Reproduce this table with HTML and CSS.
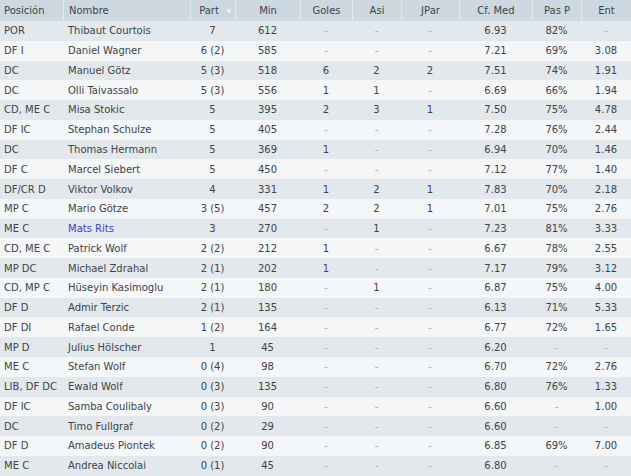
FILE: index.html
```html
<!DOCTYPE html>
<html lang="es">
<head>
<meta charset="utf-8">
<title>Plantilla</title>
<link rel="stylesheet" href="styles.css">
</head>
<body>
<div class="table">
  <div class="row head">
    <div class="c l">Posición</div><div class="c l">Nombre</div><div class="c sort">Part<span class="arrow">▼</span></div><div class="c">Min</div><div class="c">Goles</div><div class="c">Asi</div><div class="c">JPar</div><div class="c">Cf. Med</div><div class="c">Pas P</div><div class="c">Ent</div>
  </div>
  <div class="row"><div class="c l">POR</div><div class="c l">Thibaut Courtois</div><div class="c">7</div><div class="c">612</div><div class="c d">-</div><div class="c d">-</div><div class="c d">-</div><div class="c">6.93</div><div class="c">82%</div><div class="c d">-</div></div>
  <div class="row"><div class="c l">DF I</div><div class="c l">Daniel Wagner</div><div class="c">6 (2)</div><div class="c">585</div><div class="c d">-</div><div class="c d">-</div><div class="c d">-</div><div class="c">7.21</div><div class="c">69%</div><div class="c">3.08</div></div>
  <div class="row"><div class="c l">DC</div><div class="c l">Manuel Götz</div><div class="c">5 (3)</div><div class="c">518</div><div class="c">6</div><div class="c">2</div><div class="c">2</div><div class="c">7.51</div><div class="c">74%</div><div class="c">1.91</div></div>
  <div class="row"><div class="c l">DC</div><div class="c l">Olli Taivassalo</div><div class="c">5 (3)</div><div class="c">556</div><div class="c">1</div><div class="c">1</div><div class="c d">-</div><div class="c">6.69</div><div class="c">66%</div><div class="c">1.94</div></div>
  <div class="row"><div class="c l">CD, ME C</div><div class="c l">Misa Stokic</div><div class="c">5</div><div class="c">395</div><div class="c">2</div><div class="c">3</div><div class="c">1</div><div class="c">7.50</div><div class="c">75%</div><div class="c">4.78</div></div>
  <div class="row"><div class="c l">DF IC</div><div class="c l">Stephan Schulze</div><div class="c">5</div><div class="c">405</div><div class="c d">-</div><div class="c d">-</div><div class="c d">-</div><div class="c">7.28</div><div class="c">76%</div><div class="c">2.44</div></div>
  <div class="row"><div class="c l">DC</div><div class="c l">Thomas Hermann</div><div class="c">5</div><div class="c">369</div><div class="c">1</div><div class="c d">-</div><div class="c d">-</div><div class="c">6.94</div><div class="c">70%</div><div class="c">1.46</div></div>
  <div class="row"><div class="c l">DF C</div><div class="c l">Marcel Siebert</div><div class="c">5</div><div class="c">450</div><div class="c d">-</div><div class="c d">-</div><div class="c d">-</div><div class="c">7.12</div><div class="c">77%</div><div class="c">1.40</div></div>
  <div class="row"><div class="c l">DF/CR D</div><div class="c l">Viktor Volkov</div><div class="c">4</div><div class="c">331</div><div class="c">1</div><div class="c">2</div><div class="c">1</div><div class="c">7.83</div><div class="c">70%</div><div class="c">2.18</div></div>
  <div class="row"><div class="c l">MP C</div><div class="c l">Mario Götze</div><div class="c">3 (5)</div><div class="c">457</div><div class="c">2</div><div class="c">2</div><div class="c">1</div><div class="c">7.01</div><div class="c">75%</div><div class="c">2.76</div></div>
  <div class="row"><div class="c l">ME C</div><div class="c l link">Mats Rits</div><div class="c">3</div><div class="c">270</div><div class="c d">-</div><div class="c">1</div><div class="c d">-</div><div class="c">7.23</div><div class="c">81%</div><div class="c">3.33</div></div>
  <div class="row"><div class="c l">CD, ME C</div><div class="c l">Patrick Wolf</div><div class="c">2 (2)</div><div class="c">212</div><div class="c">1</div><div class="c d">-</div><div class="c d">-</div><div class="c">6.67</div><div class="c">78%</div><div class="c">2.55</div></div>
  <div class="row"><div class="c l">MP DC</div><div class="c l">Michael Zdrahal</div><div class="c">2 (1)</div><div class="c">202</div><div class="c">1</div><div class="c d">-</div><div class="c d">-</div><div class="c">7.17</div><div class="c">79%</div><div class="c">3.12</div></div>
  <div class="row"><div class="c l">CD, MP C</div><div class="c l">Hüseyin Kasimoglu</div><div class="c">2 (1)</div><div class="c">180</div><div class="c d">-</div><div class="c">1</div><div class="c d">-</div><div class="c">6.87</div><div class="c">75%</div><div class="c">4.00</div></div>
  <div class="row"><div class="c l">DF D</div><div class="c l">Admir Terzic</div><div class="c">2 (1)</div><div class="c">135</div><div class="c d">-</div><div class="c d">-</div><div class="c d">-</div><div class="c">6.13</div><div class="c">71%</div><div class="c">5.33</div></div>
  <div class="row"><div class="c l">DF DI</div><div class="c l">Rafael Conde</div><div class="c">1 (2)</div><div class="c">164</div><div class="c d">-</div><div class="c d">-</div><div class="c d">-</div><div class="c">6.77</div><div class="c">72%</div><div class="c">1.65</div></div>
  <div class="row"><div class="c l">MP D</div><div class="c l">Julius Hölscher</div><div class="c">1</div><div class="c">45</div><div class="c d">-</div><div class="c d">-</div><div class="c d">-</div><div class="c">6.20</div><div class="c d">-</div><div class="c d">-</div></div>
  <div class="row"><div class="c l">ME C</div><div class="c l">Stefan Wolf</div><div class="c">0 (4)</div><div class="c">98</div><div class="c d">-</div><div class="c d">-</div><div class="c d">-</div><div class="c">6.70</div><div class="c">72%</div><div class="c">2.76</div></div>
  <div class="row"><div class="c l">LIB, DF DC</div><div class="c l">Ewald Wolf</div><div class="c">0 (3)</div><div class="c">135</div><div class="c d">-</div><div class="c d">-</div><div class="c d">-</div><div class="c">6.80</div><div class="c">76%</div><div class="c">1.33</div></div>
  <div class="row"><div class="c l">DF IC</div><div class="c l">Samba Coulibaly</div><div class="c">0 (3)</div><div class="c">90</div><div class="c d">-</div><div class="c d">-</div><div class="c d">-</div><div class="c">6.60</div><div class="c d">-</div><div class="c">1.00</div></div>
  <div class="row"><div class="c l">DC</div><div class="c l">Timo Fullgraf</div><div class="c">0 (2)</div><div class="c">29</div><div class="c d">-</div><div class="c d">-</div><div class="c d">-</div><div class="c">6.60</div><div class="c d">-</div><div class="c d">-</div></div>
  <div class="row"><div class="c l">DF D</div><div class="c l">Amadeus Piontek</div><div class="c">0 (2)</div><div class="c">90</div><div class="c d">-</div><div class="c d">-</div><div class="c d">-</div><div class="c">6.85</div><div class="c">69%</div><div class="c">7.00</div></div>
  <div class="row"><div class="c l">ME C</div><div class="c l">Andrea Niccolai</div><div class="c">0 (1)</div><div class="c">45</div><div class="c d">-</div><div class="c d">-</div><div class="c d">-</div><div class="c">6.80</div><div class="c d">-</div><div class="c d">-</div></div>
</div>
</body>
</html>
```
FILE: styles.css
```css
html, body {
  margin: 0;
  padding: 0;
  background: #f4f6f8;
}
body {
  font-family: "DejaVu Sans", sans-serif;
  font-size: 10px;
  color: #3e4448;
  overflow: hidden;
}
.table {
  width: 631px;
  display: flex;
  flex-direction: column;
}
.row {
  display: grid;
  grid-template-columns: 63px 127px 45px 65px 52px 49px 58px 73px 49px 50px;
  height: 19.78px;
  align-items: center;
  background: #f4f6f8;
}
.row:nth-child(even) {
  background: #e3e8ec;
}
.row.head {
  height: 21px;
  background: #cdd8e0;
  align-items: stretch;
}
.head .c {
  display: flex;
  align-items: center;
  justify-content: center;
  border-left: 1px solid #e2e9ee;
}
.head .c:first-child {
  border-left: none;
}
.head .c.l {
  justify-content: flex-start;
}
.c {
  text-align: center;
  white-space: nowrap;
  overflow: hidden;
}
.c.l {
  text-align: left;
  padding-left: 4px;
}
.c.l + .c.l {
  padding-left: 5px;
}
.head .sort {
  position: relative;
  padding-right: 8px;
}
.arrow {
  position: absolute;
  right: 4px;
  top: 7px;
  font-size: 6px;
  color: #eef2f5;
}
.d {
  color: #a8aeb3;
}
.link {
  color: #3c3cc8;
}
```
